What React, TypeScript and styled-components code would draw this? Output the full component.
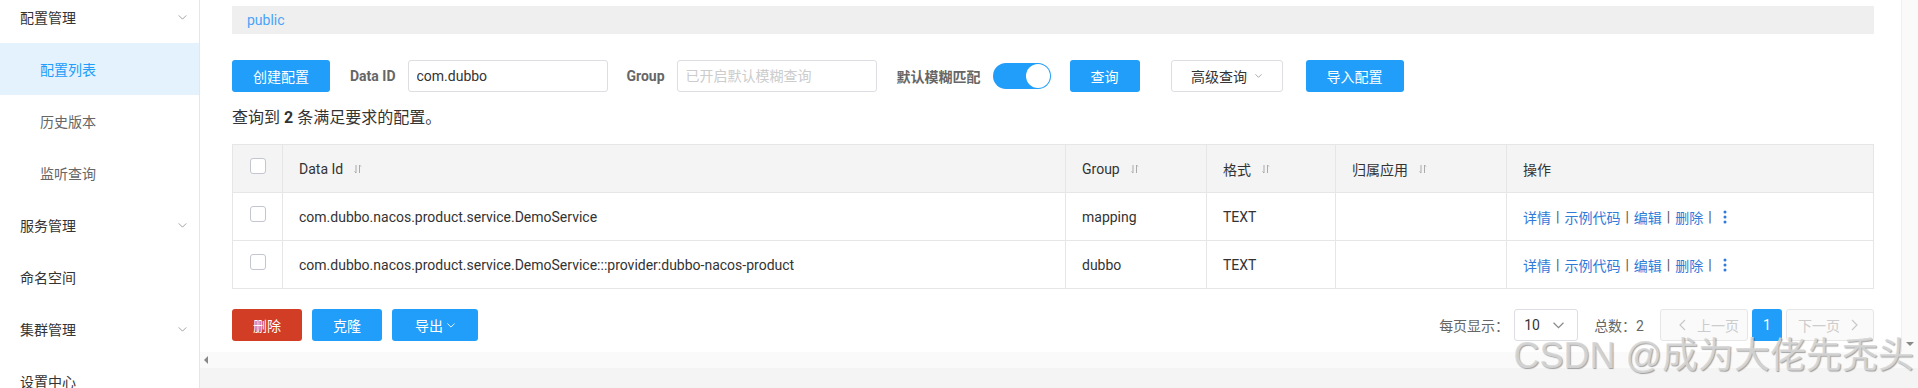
import styled, { createGlobalStyle } from 'styled-components';

const GlobalStyle = createGlobalStyle`
  html, body {
    margin: 0;
    padding: 0;
  }
  body {
    font-family: Roboto, "Noto Sans CJK SC", sans-serif;
    font-size: 14px;
    color: #333;
    background: #fff;
  }
  * {
    box-sizing: border-box;
  }
`;

const PRIMARY = '#209efa';
const LINK = '#2f7bd8';

const menu = [
  { label: '配置管理', arrow: true },
  { label: '配置列表', sub: true, active: true },
  { label: '历史版本', sub: true },
  { label: '监听查询', sub: true },
  { label: '服务管理', arrow: true },
  { label: '命名空间' },
  { label: '集群管理', arrow: true },
  { label: '设置中心' },
];

const rows = [
  { id: 'com.dubbo.nacos.product.service.DemoService', group: 'mapping', type: 'TEXT' },
  {
    id: 'com.dubbo.nacos.product.service.DemoService:::provider:dubbo-nacos-product',
    group: 'dubbo',
    type: 'TEXT',
  },
];

function Chevron({ color = '#999', size = 9 }: { color?: string; size?: number }) {
  return (
    <svg width={size} height={Math.round(size * 0.6)} viewBox="0 0 10 6" fill="none">
      <polyline points="0.5,0.5 5,5 9.5,0.5" stroke={color} strokeWidth="1.1" />
    </svg>
  );
}

function SortIcon() {
  return (
    <svg width="8" height="10" viewBox="0 0 8 10" fill="none">
      <path d="M2 1v8M0.5 7.5L2 9M5.5 1v8M5.5 1L7 2.5" stroke="#aaa" strokeWidth="1" />
    </svg>
  );
}

function MoreIcon() {
  return (
    <svg width="4" height="14" viewBox="0 0 4 14">
      <circle cx="2" cy="2" r="1.5" fill={LINK} />
      <circle cx="2" cy="7" r="1.5" fill={LINK} />
      <circle cx="2" cy="12" r="1.5" fill={LINK} />
    </svg>
  );
}

function PageArrow({ dir }: { dir: 'left' | 'right' }) {
  return (
    <svg width="7" height="12" viewBox="0 0 7 12" fill="none">
      <polyline
        points={dir === 'left' ? '6,1 1,6 6,11' : '1,1 6,6 1,11'}
        stroke="#c8c8c8"
        strokeWidth="1.2"
      />
    </svg>
  );
}

export default function App() {
  return (
    <Page>
      <GlobalStyle />
      <Sidebar>
        <MenuList>
          {menu.map((m) => (
            <MenuItem key={m.label} $sub={m.sub} $active={m.active}>
              <span>{m.label}</span>
              {m.arrow && <Chevron />}
            </MenuItem>
          ))}
        </MenuList>
      </Sidebar>

      <Main>
        <Viewport>
          <Content>
            <NamespaceBar>public</NamespaceBar>

            <Toolbar>
              <Button $w={98}>创建配置</Button>
              <Label $ml={20}>Data ID</Label>
              <Input defaultValue="com.dubbo" />
              <Label $ml={19}>Group</Label>
              <Input placeholder="已开启默认模糊查询" />
              <Label $ml={20}>默认模糊匹配</Label>
              <Switch>
                <Knob />
              </Switch>
              <Button $w={70} $ml={19}>
                查询
              </Button>
              <GhostButton $ml={31}>
                高级查询
                <Chevron color="#888" size={7} />
              </GhostButton>
              <Button $w={98} $ml={23}>
                导入配置
              </Button>
            </Toolbar>

            <Summary>
              查询到 <strong>2</strong> 条满足要求的配置。
            </Summary>

            <Table>
              <HeadCell $center>
                <Checkbox $up />
              </HeadCell>
              <HeadCell>
                Data Id <SortIcon />
              </HeadCell>
              <HeadCell>
                Group <SortIcon />
              </HeadCell>
              <HeadCell>
                格式 <SortIcon />
              </HeadCell>
              <HeadCell>
                归属应用 <SortIcon />
              </HeadCell>
              <HeadCell>操作</HeadCell>

              {rows.map((r) => (
                <Row key={r.id}>
                  <Cell $center>
                    <Checkbox $up />
                  </Cell>
                  <Cell>{r.id}</Cell>
                  <Cell>{r.group}</Cell>
                  <Cell>{r.type}</Cell>
                  <Cell />
                  <Cell>
                    <Link>详情</Link>
                    <Sep>|</Sep>
                    <Link>示例代码</Link>
                    <Sep>|</Sep>
                    <Link>编辑</Link>
                    <Sep>|</Sep>
                    <Link>删除</Link>
                    <Sep>|</Sep>
                    <More>
                      <MoreIcon />
                    </More>
                  </Cell>
                </Row>
              ))}
            </Table>

            <Footer>
              <Actions>
                <Button $w={70} $danger>
                  删除
                </Button>
                <Button $w={70}>克隆</Button>
                <Button $w={86}>
                  导出
                  <Chevron color="#fff" size={8} />
                </Button>
              </Actions>

              <Pagination>
                <PagerText>每页显示：</PagerText>
                <Select>
                  10
                  <Chevron color="#888" size={11} />
                </Select>
                <PagerText $ml={16}>总数：2</PagerText>
                <PageButton $ml={16} $prev>
                  <PageArrow dir="left" />
                  上一页
                </PageButton>
                <CurrentPage>1</CurrentPage>
                <PageButton>
                  下一页
                  <PageArrow dir="right" />
                </PageButton>
              </Pagination>
            </Footer>
          </Content>
          <VScroll>
            <DownArrow />
          </VScroll>
        </Viewport>
        <HScroll>
          <LeftArrow />
        </HScroll>
        <BottomBand />
      </Main>

      <Watermark>CSDN @成为大佬先秃头</Watermark>
    </Page>
  );
}

const Page = styled.div`
  position: relative;
  display: flex;
  width: 1918px;
  height: 388px;
  overflow: hidden;
`;

const Sidebar = styled.nav`
  width: 200px;
  flex-shrink: 0;
  border-right: 1px solid #e6e6e6;
  background: #fff;
  overflow: hidden;
`;

const MenuList = styled.div`
  margin-top: -9px;
`;

const MenuItem = styled.div<{ $sub?: boolean; $active?: boolean }>`
  height: 52px;
  display: flex;
  align-items: center;
  justify-content: space-between;
  padding: 0 12px 0 ${({ $sub }) => ($sub ? 40 : 20)}px;
  font-size: 14px;
  color: ${({ $sub, $active }) => ($active ? PRIMARY : $sub ? '#666' : '#333')};
  background: ${({ $active }) => ($active ? '#e4f2fe' : 'transparent')};
`;

const Main = styled.div`
  flex: 1;
  min-width: 0;
  display: flex;
  flex-direction: column;
`;

const Viewport = styled.div`
  height: 352px;
  display: flex;
`;

const Content = styled.div`
  flex: 1;
  min-width: 0;
  padding: 6px 27px 0 32px;
`;

const NamespaceBar = styled.div`
  height: 28px;
  line-height: 28px;
  padding-left: 15px;
  background: #efefef;
  color: #4aa3f7;
  font-size: 14px;
`;

const Toolbar = styled.div`
  display: flex;
  align-items: center;
  height: 32px;
  margin-top: 26px;
`;

const Button = styled.button<{ $w: number; $ml?: number; $danger?: boolean }>`
  width: ${({ $w }) => $w}px;
  height: 32px;
  margin-left: ${({ $ml }) => $ml ?? 0}px;
  display: inline-flex;
  align-items: center;
  justify-content: center;
  gap: 4px;
  border: none;
  border-radius: 3px;
  background: ${({ $danger }) => ($danger ? '#d23d26' : PRIMARY)};
  color: #fff;
  font-family: inherit;
  font-size: 14px;
  padding: 0;
`;

const GhostButton = styled.button<{ $ml?: number }>`
  width: 112px;
  height: 32px;
  margin-left: ${({ $ml }) => $ml ?? 0}px;
  display: inline-flex;
  align-items: center;
  justify-content: center;
  gap: 8px;
  border: 1px solid #dcdee3;
  border-radius: 3px;
  background: #fff;
  color: #333;
  font-family: inherit;
  font-size: 14px;
  padding: 0;
`;

const Label = styled.span<{ $ml: number }>`
  margin-left: ${({ $ml }) => $ml}px;
  margin-right: 12px;
  font-weight: 700;
  color: #666;
  font-size: 14px;
`;

const Input = styled.input`
  width: 200px;
  height: 32px;
  border: 1px solid #dcdee3;
  border-radius: 3px;
  padding: 0 8px;
  font-family: inherit;
  font-size: 14px;
  color: #333;
  outline: none;
  &::placeholder {
    color: #ccc;
  }
`;

const Switch = styled.div`
  width: 58px;
  height: 26px;
  border-radius: 13px;
  background: ${PRIMARY};
  display: flex;
  align-items: center;
  justify-content: flex-end;
  padding: 0 1px;
`;

const Knob = styled.div`
  width: 24px;
  height: 24px;
  border-radius: 50%;
  background: #fff;
`;

const Summary = styled.div`
  margin: 16px 0 16px;
  line-height: 20px;
  font-size: 16px;
  color: #333;
  strong {
    font-weight: 700;
  }
`;

const Table = styled.div`
  display: grid;
  grid-template-columns: 50px 783px 141px 129px 171px 1fr;
  border-top: 1px solid #e6e6e6;
  border-left: 1px solid #e6e6e6;
`;

const Row = styled.div`
  display: contents;
`;

const Cell = styled.div<{ $center?: boolean }>`
  height: 48px;
  display: flex;
  align-items: center;
  justify-content: ${({ $center }) => ($center ? 'center' : 'flex-start')};
  padding: 0 ${({ $center }) => ($center ? 0 : 16)}px;
  border-right: 1px solid #e6e6e6;
  border-bottom: 1px solid #e6e6e6;
  font-size: 14px;
  color: #333;
  white-space: nowrap;
`;

const HeadCell = styled(Cell)`
  background: #f4f4f4;
  gap: 11px;
`;

const Checkbox = styled.span<{ $up?: boolean }>`
  width: 16px;
  height: 16px;
  border: 1px solid #c4c6cf;
  border-radius: 3px;
  background: #fff;
  margin-bottom: ${({ $up }) => ($up ? 6 : 0)}px;
`;

const Link = styled.a`
  color: ${LINK};
  font-size: 14px;
`;

const Sep = styled.span`
  margin: 0 5px;
  color: #555;
`;

const More = styled.span`
  display: inline-flex;
  margin-left: 6px;
`;

const Footer = styled.div`
  display: flex;
  justify-content: space-between;
  align-items: center;
  margin-top: 20px;
`;

const Actions = styled.div`
  display: flex;
  gap: 10px;
`;

const Pagination = styled.div`
  display: flex;
  align-items: center;
`;

const PagerText = styled.span<{ $ml?: number }>`
  margin-left: ${({ $ml }) => $ml ?? 0}px;
  color: #666;
  font-size: 14px;
`;

const Select = styled.div`
  width: 64px;
  height: 32px;
  margin-left: 5px;
  border: 1px solid #dcdee3;
  border-radius: 3px;
  display: flex;
  align-items: center;
  justify-content: space-between;
  padding: 0 13px 0 9px;
  font-size: 14px;
  color: #333;
`;

const PageButton = styled.div<{ $ml?: number; $prev?: boolean }>`
  width: 88px;
  height: 32px;
  margin-left: ${({ $ml }) => $ml ?? 0}px;
  display: flex;
  align-items: center;
  gap: 11px;
  padding: ${({ $prev }) => ($prev ? '0 0 0 18px' : '0 0 0 11px')};
  border: 1px solid #e6e6e6;
  border-radius: 3px;
  background: #fafafa;
  color: #ccc;
  font-size: 14px;
`;

const CurrentPage = styled.div`
  width: 30px;
  height: 32px;
  margin: 0 4px;
  display: flex;
  align-items: center;
  justify-content: center;
  border-radius: 3px;
  background: ${PRIMARY};
  color: #fff;
  font-size: 14px;
`;

const VScroll = styled.div`
  width: 17px;
  flex-shrink: 0;
  background: #fafafa;
  border-left: 1px solid #f0f0f0;
  display: flex;
  align-items: flex-end;
  justify-content: center;
  padding-bottom: 6px;
`;

const DownArrow = styled.span`
  width: 0;
  height: 0;
  border-left: 4px solid transparent;
  border-right: 4px solid transparent;
  border-top: 4px solid #888;
`;

const HScroll = styled.div`
  height: 16px;
  background: #fafafa;
  display: flex;
  align-items: center;
  padding-left: 4px;
`;

const LeftArrow = styled.span`
  width: 0;
  height: 0;
  border-top: 4px solid transparent;
  border-bottom: 4px solid transparent;
  border-right: 4px solid #888;
`;

const BottomBand = styled.div`
  flex: 1;
  background: #f4f4f4;
`;

const Watermark = styled.div`
  position: absolute;
  right: 4px;
  top: 336px;
  font-family: "Liberation Sans", "Noto Sans CJK SC", sans-serif;
  font-size: 36px;
  line-height: 40px;
  color: rgba(215, 215, 215, 0.9);
  text-shadow: 1px 1px 1px rgba(0, 0, 0, 0.35);
  white-space: nowrap;
  pointer-events: none;
`;
